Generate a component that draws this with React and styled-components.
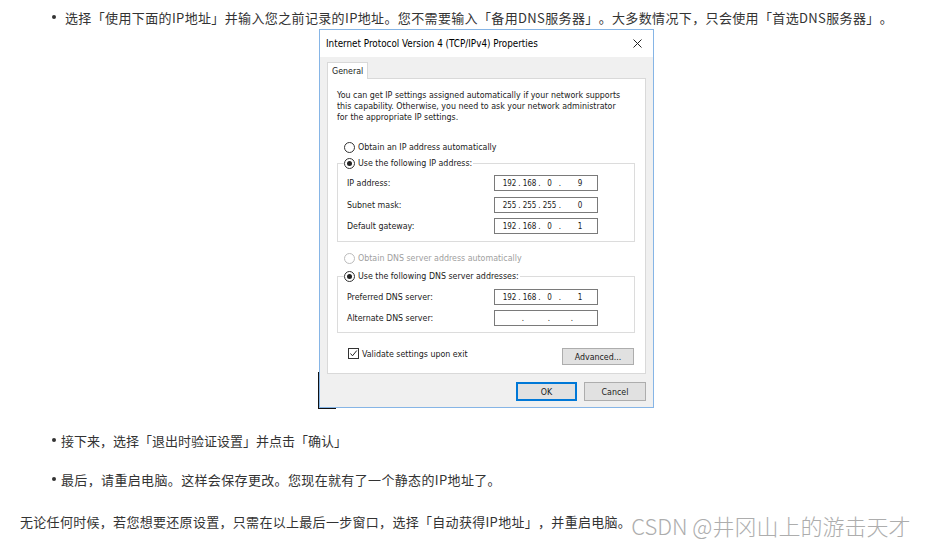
import React from "react";
import styled, { createGlobalStyle } from "styled-components";

const GlobalStyle = createGlobalStyle`
  html, body { margin: 0; padding: 0; background: #ffffff; }
  body {
    font-family: "Liberation Sans", "Noto Sans CJK SC", sans-serif;
    color: #333333;
  }
`;

const Page = styled.div`
  width: 926px;
  height: 545px;
  overflow: hidden;
  position: relative;
  font-family: "Noto Sans CJK SC", "Noto Sans", sans-serif;
  text-spacing-trim: space-all;
`;

const Bullet = styled.div`
  display: flex;
  align-items: center;
  height: 22px;
  padding-left: ${(p) => p.$indent}px;
  margin-top: ${(p) => p.$top || 0}px;
  font-size: 13px;
  letter-spacing: ${(p) => p.$ls || 0}px;
  color: #333;
  white-space: nowrap;
`;

const Dot = styled.span`
  width: 4px;
  height: 4px;
  border-radius: 50%;
  background: #333;
  flex: none;
  margin-right: ${(p) => p.$gap}px;
`;

const Para = styled.div`
  display: flex;
  align-items: center;
  justify-content: space-between;
  height: 22px;
  margin-top: ${(p) => p.$top}px;
  padding-left: 20px;
  padding-right: 16px;
  font-size: 13px;
  white-space: nowrap;
`;

const ParaText = styled.span`
  letter-spacing: 0.3px;
`;

const Watermark = styled.span`
  font-size: 22px;
  font-weight: 300;
  color: #adadad;
  margin-top: 8px;
`;

/* ---------------- Dialog ---------------- */

const DialogWrap = styled.div`
  margin-top: 1px;
  margin-left: 319px;
  width: 335px;
  position: relative;
  &::before {
    content: "";
    position: absolute;
    left: -1px;
    top: 343px;
    bottom: -1px;
    width: 1px;
    background: #111;
  }
  &::after {
    content: "";
    position: absolute;
    left: -1px;
    bottom: -1px;
    width: 18px;
    height: 1px;
    background: #111;
  }
`;

const Dialog = styled.div`
  border: 1px solid #86b5e6;
  background: #f0f0f0;
  font-family: "DejaVu Sans Condensed", "DejaVu Sans", sans-serif;
  font-stretch: condensed;
  font-size: 8.8px;
  color: #1a1a1a;
`;

const TitleBar = styled.div`
  height: 27px;
  background: #ffffff;
  display: flex;
  align-items: center;
  justify-content: space-between;
  padding-left: 6px;
  padding-right: 11px;
  font-size: 9.8px;
  color: #000;
`;

const CloseIcon = () => (
  <svg width="9" height="9" viewBox="0 0 9 9">
    <path d="M0.5 0.5 L8.5 8.5 M8.5 0.5 L0.5 8.5" stroke="#222" strokeWidth="1" />
  </svg>
);

const TabArea = styled.div`
  padding: 5px 7px 0 7px;
`;

const Tab = styled.div`
  display: inline-flex;
  align-items: center;
  height: 16px;
  padding: 0 4px;
  background: #fff;
  border: 1px solid #d9d9d9;
  border-bottom: none;
  margin-bottom: -1px;
  position: relative;
`;

const Panel = styled.div`
  background: #fff;
  border: 1px solid #d9d9d9;
  height: 296px;
  box-sizing: border-box;
  padding: 11px 10px 0 9px;
  display: flex;
  flex-direction: column;
`;

const Intro = styled.div`
  line-height: 11px;
  color: #1a1a1a;
`;

const OptionRow = styled.div`
  display: flex;
  align-items: center;
  height: 12px;
  padding-left: 7px;
  margin-top: ${(p) => p.$top || 0}px;
  color: ${(p) => (p.$disabled ? "#a0a0a0" : "#1a1a1a")};
`;

const Radio = styled.span`
  width: 9px;
  height: 9px;
  border-radius: 50%;
  border: 1px solid ${(p) => (p.$disabled ? "#bcbcbc" : "#333")};
  background: #fff;
  flex: none;
  margin-right: 3px;
  display: flex;
  align-items: center;
  justify-content: center;
  &::after {
    content: "";
    display: ${(p) => (p.$checked ? "block" : "none")};
    width: 5px;
    height: 5px;
    border-radius: 50%;
    background: #222;
  }
`;

const Group = styled.div`
  border: 1px solid #dcdcdc;
  margin-top: ${(p) => p.$top}px;
  height: ${(p) => p.$h}px;
  box-sizing: border-box;
  display: flex;
  flex-direction: column;
`;

const Legend = styled(OptionRow)`
  margin-top: -7px;
  align-self: flex-start;
  margin-left: 6px;
  padding: 0 1px 0 0;
  background: #fff;
`;

const FieldRow = styled.div`
  display: flex;
  align-items: center;
  justify-content: space-between;
  height: 16px;
  padding-left: 9px;
  padding-right: 36px;
  margin-top: ${(p) => p.$top}px;
`;

const IpBox = styled.div`
  width: 104px;
  height: 16px;
  box-sizing: border-box;
  border: 1px solid #7a7a7a;
  background: #fff;
  display: grid;
  grid-template-columns: ${(p) =>
    p.$empty
      ? "19px 4px 22px 4px 19px 4px 1fr"
      : "15px 5px 15px 5px 15px 6px 1fr"};
  padding-left: 7px;
  align-items: center;
  font-size: 8px;
  color: #1a1a1a;
`;

const Seg = styled.span`
  text-align: center;
`;

const Sep = styled.span`
  text-align: center;
`;

const IpField = ({ value }) => {
  const parts = value ? value.split(".") : ["", "", "", ""];
  const out = [];
  parts.forEach((p, i) => {
    out.push(<Seg key={"s" + i}>{p}</Seg>);
    if (i < 3) out.push(<Sep key={"d" + i}>.</Sep>);
  });
  return <IpBox $empty={!value}>{out}</IpBox>;
};

const BottomRow = styled.div`
  display: flex;
  align-items: center;
  justify-content: space-between;
  margin-top: 15px;
  padding-left: 11px;
  padding-right: 1px;
`;

const CheckLabel = styled.div`
  display: flex;
  align-items: center;
  margin-top: -6px;
`;

const Check = styled.span`
  width: 9px;
  height: 9px;
  border: 1px solid #333;
  background: #fff;
  margin-right: 3px;
  display: flex;
  align-items: center;
  justify-content: center;
`;

const CheckMark = () => (
  <svg width="9" height="9" viewBox="0 0 9 9">
    <path d="M1.5 4.5 L3.5 6.8 L7.8 1.5" stroke="#222" strokeWidth="1" fill="none" />
  </svg>
);

const Button = styled.div`
  width: ${(p) => p.$w}px;
  height: ${(p) => p.$h}px;
  box-sizing: border-box;
  border: 1px solid ${(p) => (p.$primary ? "#0078d7" : "#adadad")};
  box-shadow: ${(p) => (p.$primary ? "inset 0 0 0 1px #0078d7" : "none")};
  background: #e1e1e1;
  display: flex;
  align-items: center;
  justify-content: center;
  color: #1a1a1a;
`;

const Footer = styled.div`
  display: flex;
  justify-content: flex-end;
  gap: 7px;
  padding: 8px 7px 6px 0;
`;

export default function App() {
  return (
    <>
      <GlobalStyle />
      <Page>
        <Bullet $indent={52} $top={6} $ls={0.36}>
          <Dot $gap={9} />
          选择「使用下面的IP地址」并输入您之前记录的IP地址。您不需要输入「备用DNS服务器」。大多数情况下，只会使用「首选DNS服务器」。
        </Bullet>

        <DialogWrap>
          <Dialog>
            <TitleBar>
              <span>Internet Protocol Version 4 (TCP/IPv4) Properties</span>
              <CloseIcon />
            </TitleBar>
            <TabArea>
              <Tab>General</Tab>
              <Panel>
                <Intro>
                  You can get IP settings assigned automatically if your network supports
                  <br />
                  this capability. Otherwise, you need to ask your network administrator
                  <br />
                  for the appropriate IP settings.
                </Intro>

                <OptionRow $top={18}>
                  <Radio />
                  Obtain an IP address automatically
                </OptionRow>

                <Group $top={10} $h={79}>
                  <Legend>
                    <Radio $checked />
                    Use the following IP address:
                  </Legend>
                  <FieldRow $top={6}>
                    <span>IP address:</span>
                    <IpField value="192.168.0.9" />
                  </FieldRow>
                  <FieldRow $top={6}>
                    <span>Subnet mask:</span>
                    <IpField value="255.255.255.0" />
                  </FieldRow>
                  <FieldRow $top={5}>
                    <span>Default gateway:</span>
                    <IpField value="192.168.0.1" />
                  </FieldRow>
                </Group>

                <OptionRow $top={10} $disabled>
                  <Radio $disabled />
                  Obtain DNS server address automatically
                </OptionRow>

                <Group $top={12} $h={57}>
                  <Legend>
                    <Radio $checked />
                    Use the following DNS server addresses:
                  </Legend>
                  <FieldRow $top={7}>
                    <span>Preferred DNS server:</span>
                    <IpField value="192.168.0.1" />
                  </FieldRow>
                  <FieldRow $top={5}>
                    <span>Alternate DNS server:</span>
                    <IpField value="" />
                  </FieldRow>
                </Group>

                <BottomRow>
                  <CheckLabel>
                    <Check>
                      <CheckMark />
                    </Check>
                    Validate settings upon exit
                  </CheckLabel>
                  <Button $w={72} $h={17}>
                    Advanced...
                  </Button>
                </BottomRow>
              </Panel>
            </TabArea>
            <Footer>
              <Button $w={61} $h={19} $primary>
                OK
              </Button>
              <Button $w={62} $h={19}>
                Cancel
              </Button>
            </Footer>
          </Dialog>
        </DialogWrap>

        <Bullet $indent={52} $top={21}>
          <Dot $gap={5} />
          接下来，选择「退出时验证设置」并点击「确认」
        </Bullet>
        <Bullet $indent={52} $top={17} $ls={0.35}>
          <Dot $gap={5} />
          最后，请重启电脑。这样会保存更改。您现在就有了一个静态的IP地址了。
        </Bullet>
        <Para $top={20}>
          <ParaText>
            无论任何时候，若您想要还原设置，只需在以上最后一步窗口，选择「自动获得IP地址」，并重启电脑。
          </ParaText>
          <Watermark>CSDN @井冈山上的游击天才</Watermark>
        </Para>
      </Page>
    </>
  );
}
